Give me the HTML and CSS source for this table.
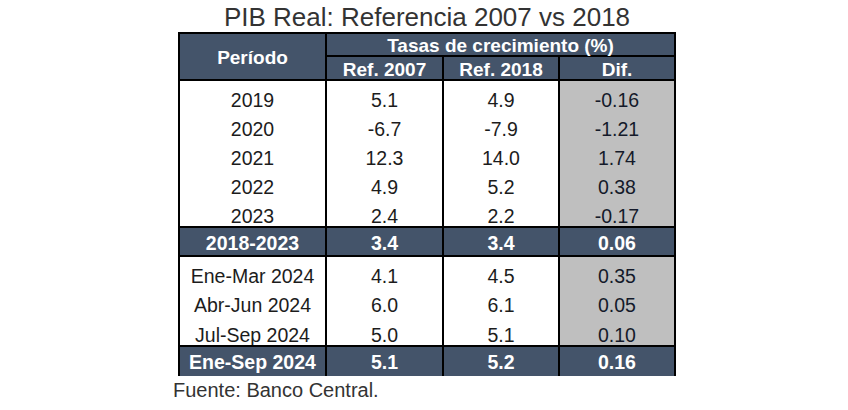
FILE: index.html
```html
<!DOCTYPE html>
<html lang="es">
<head>
<meta charset="utf-8">
<title>PIB Real: Referencia 2007 vs 2018</title>
<link rel="stylesheet" href="styles.css">
</head>
<body>
<div class="sheet">
  <div class="title">PIB Real: Referencia 2007 vs 2018</div>
  <div class="grid">
    <div class="c h period">Período</div>
    <div class="c h tasas vl">Tasas de crecimiento (%)</div>
    <div class="c h sub vl">Ref. 2007</div>
    <div class="c h sub vl">Ref. 2018</div>
    <div class="c h sub vl">Dif.</div>

    <div class="c">2019</div><div class="c vl">5.1</div><div class="c vl">4.9</div><div class="c vl dif">-0.16</div>
    <div class="c">2020</div><div class="c vl">-6.7</div><div class="c vl">-7.9</div><div class="c vl dif">-1.21</div>
    <div class="c">2021</div><div class="c vl">12.3</div><div class="c vl">14.0</div><div class="c vl dif">1.74</div>
    <div class="c">2022</div><div class="c vl">4.9</div><div class="c vl">5.2</div><div class="c vl dif">0.38</div>
    <div class="c">2023</div><div class="c vl">2.4</div><div class="c vl">2.2</div><div class="c vl dif">-0.17</div>

    <div class="c sum">2018-2023</div><div class="c sum vl">3.4</div><div class="c sum vl">3.4</div><div class="c sum vl">0.06</div>

    <div class="c">Ene-Mar 2024</div><div class="c vl">4.1</div><div class="c vl">4.5</div><div class="c vl dif">0.35</div>
    <div class="c">Abr-Jun 2024</div><div class="c vl">6.0</div><div class="c vl">6.1</div><div class="c vl dif">0.05</div>
    <div class="c">Jul-Sep 2024</div><div class="c vl">5.0</div><div class="c vl">5.1</div><div class="c vl dif">0.10</div>

    <div class="c fin">Ene-Sep 2024</div><div class="c fin vl">5.1</div><div class="c fin vl">5.2</div><div class="c fin vl">0.16</div>
  </div>
</div>
<div class="source">Fuente: Banco Central.</div>
</body>
</html>
```

FILE: styles.css
```css
* { box-sizing: border-box; }

body {
  margin: 0;
  background: #ffffff;
  font-family: "Liberation Sans", Arial, sans-serif;
}

.sheet {
  margin-left: 178px;
  width: 498px;
}

.title {
  margin-top: 2px;
  font-size: 26px;
  line-height: 30px;
  color: #333333;
  text-align: center;
}

.grid {
  display: grid;
  grid-template-columns: 145px 117px 116px 116px;
  grid-template-rows: 23px 24px 29px 29px 29px 29px 29px 31px 29px 29px 30px 31px;
  border-top: 2px solid #000;
  border-left: 2px solid #000;
  border-right: 2px solid #000;
}

.c {
  display: flex;
  align-items: flex-end;
  justify-content: center;
  font-size: 19.5px;
  line-height: 19px;
  color: #1c1c1c;
  white-space: nowrap;
}

.vl { border-left: 2px solid #000; }

.h {
  background: #44546a;
  color: #ffffff;
  font-weight: bold;
  font-size: 19px;
}

.period {
  grid-row: 1 / span 2;
  align-items: center;
  padding-top: 2px;
  border-bottom: 2px solid #000;
}

.tasas {
  grid-column: 2 / span 3;
  border-bottom: 2px solid #000;
}

.sub { border-bottom: 2px solid #000; }

.dif {
  background: #bfbfbf;
  color: #141a2a;
}

.sum {
  background: #44546a;
  color: #ffffff;
  font-weight: bold;
  border-top: 2px solid #000;
  border-bottom: 2px solid #000;
  padding-bottom: 2px;
}

.fin {
  background: #44546a;
  color: #ffffff;
  font-weight: bold;
  border-top: 2px solid #000;
  padding-bottom: 4px;
}

.source {
  margin-left: 173px;
  margin-top: 4px;
  font-size: 20px;
  line-height: 20px;
  color: #333333;
}
```
